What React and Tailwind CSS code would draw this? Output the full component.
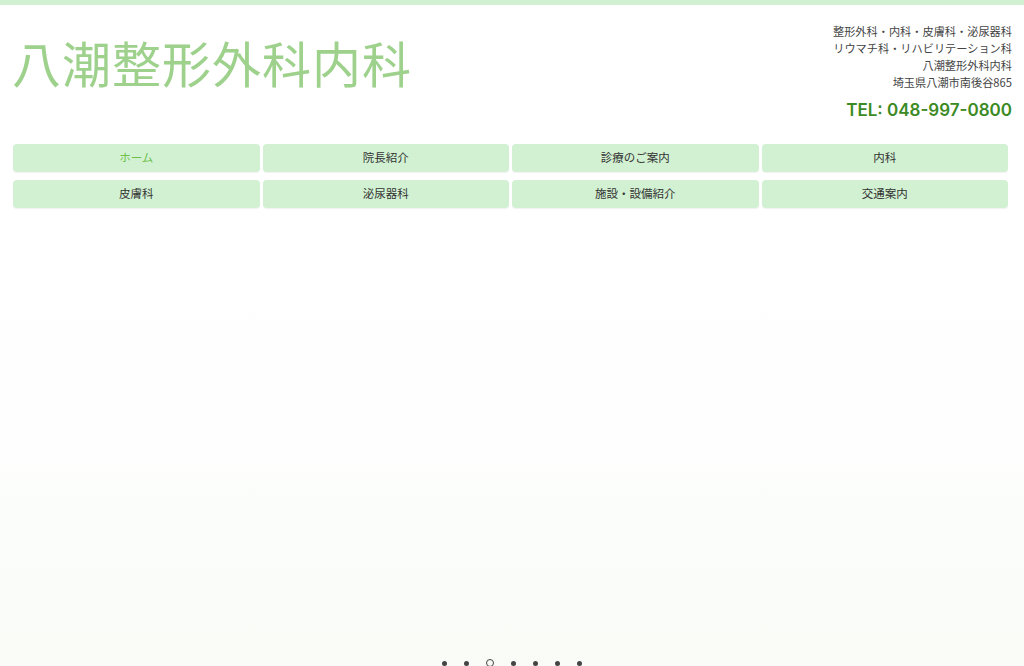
const NAV = [
  { label: 'ホーム', active: true },
  { label: '院長紹介' },
  { label: '診療のご案内' },
  { label: '内科' },
  { label: '皮膚科' },
  { label: '泌尿器科' },
  { label: '施設・設備紹介' },
  { label: '交通案内' },
]

const SLIDES = 7

const jp = { fontFamily: '"Noto Sans CJK JP", "Noto Sans", sans-serif' }

export default function App() {
  return (
    <div className="min-h-[666px] bg-white overflow-hidden" style={jp}>
      <div className="h-[5px] bg-[#d2f1d2]" />

      <header className="flex justify-between items-start px-3 pt-[18px]">
        <h1 className="text-[49px] leading-none font-normal tracking-[1px] text-[#9dd18c] mt-[14px]">
          八潮整形外科内科
        </h1>
        <div className="text-right text-[11.2px] leading-[17px] text-[#444]">
          <p>整形外科・内科・皮膚科・泌尿器科</p>
          <p>リウマチ科・リハビリテーション科</p>
          <p>八潮整形外科内科</p>
          <p>埼玉県八潮市南後谷865</p>
          <p
            className="mt-[8px] text-[17px] leading-[22px] font-semibold text-[#3c8a23]"
            style={{ fontFamily: 'Inter, "Liberation Sans", sans-serif' }}
          >
            TEL: 048-997-0800
          </p>
        </div>
      </header>

      <nav className="grid grid-cols-4 gap-x-[3px] gap-y-[8px] ml-[13px] mr-[16px] mt-[23px]">
        {NAV.map(({ label, active }) => (
          <a
            key={label}
            href="#"
            className={`h-[28px] flex items-center justify-center rounded-[4px] bg-[#d2f1d2] shadow-[0_1px_1px_rgba(0,0,0,0.06)] text-[11.5px] ${
              active ? 'text-[#6cc04a]' : 'text-[#333]'
            }`}
          >
            {label}
          </a>
        ))}
      </nav>

      {/* slideshow */}
      <div className="relative mt-[12px] h-[460px] bg-gradient-to-b from-white via-[#fdfefd] to-[#f8fbf6]">
        <div className="absolute left-0 right-0 top-[439px] flex justify-center items-center gap-[17px]">
          {Array.from({ length: SLIDES }).map((_, i) =>
            i === 2 ? (
              <span key={i} className="w-[8px] h-[8px] rounded-full border-[1.5px] border-[#444]" />
            ) : (
              <span key={i} className="w-[5px] h-[5px] rounded-full bg-[#444]" />
            )
          )}
        </div>
      </div>
    </div>
  )
}
